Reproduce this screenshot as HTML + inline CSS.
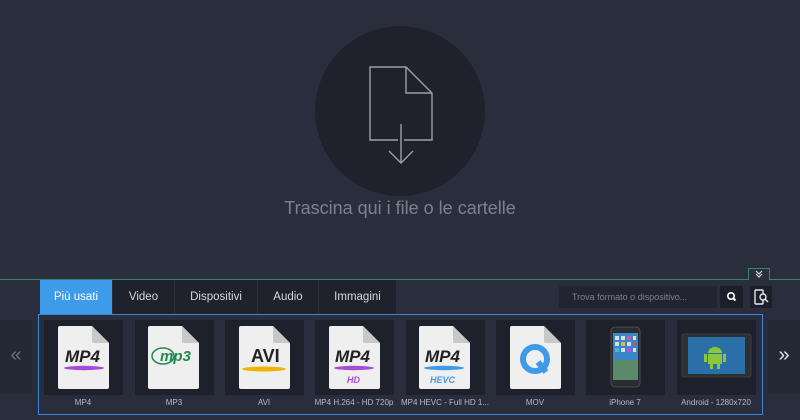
<!DOCTYPE html>
<html><head><meta charset="utf-8"><style>
*{margin:0;padding:0;box-sizing:border-box}
body{width:800px;height:420px;background:#2a2e3c;font-family:"Liberation Sans",sans-serif;position:relative;overflow:hidden}
.abs{position:absolute}
.circle{left:315px;top:26px;width:170px;height:170px;border-radius:50%;background:#1f222d}
.drop{left:0;width:800px;top:198px;text-align:center;color:#7c8190;font-size:18px}
.line{left:0;top:279px;width:800px;height:1px;background:#2f8a6a}
.tab{top:280px;height:34px;background:#1f222c;color:#d6d8de;font-size:11.5px;line-height:34px;text-align:center;border-right:1px solid #2a2e3c}
.tab.act{background:#3d9be9;color:#fff}
.box{left:38px;top:314px;width:725px;height:101px;border:1px solid #3d86d6}
.tile{top:320px;width:79px;height:75px;background:#1e212c}
.lbl{top:398px;width:90px;text-align:center;color:#b6bac4;font-size:8px}
.side{top:320px;width:32px;height:73px;background:#252935;color:#6c7180;font-size:20px;text-align:center;line-height:70px}
</style></head><body>
<div class="abs circle"></div>
<svg class="abs" style="left:0;top:0" width="800" height="200" fill="none" stroke="#9a9fad" stroke-width="1.4">
<path d="M398 140H370V67H406L432 93V140H404"/>
<path d="M406 67V93H432"/>
<path d="M401 124V163M389 151L401 163L413 151"/>
</svg>
<div class="abs drop">Trascina qui i file o le cartelle</div>
<div class="abs line"></div>
<div class="abs" style="left:748px;top:268px;width:22px;height:12px;border:1px solid #2f8a6a;border-bottom:none;background:#2a2e3c"></div>
<svg class="abs" style="left:748px;top:268px" width="22" height="12" fill="none" stroke="#d6d8de" stroke-width="1.2"><path d="M8 3L11 6L14 3M8 6L11 9L14 6"/></svg>
<div class="abs tab act" style="left:40px;width:73px">Più usati</div>
<div class="abs tab" style="left:113px;width:62px">Video</div>
<div class="abs tab" style="left:175px;width:83px">Dispositivi</div>
<div class="abs tab" style="left:258px;width:61px">Audio</div>
<div class="abs tab" style="left:319px;width:78px">Immagini</div>
<div class="abs" style="left:559px;top:286px;width:158px;height:22px;background:#222531;color:#7c8190;font-size:9px;line-height:22px;padding-left:13px">Trova formato o dispositivo...</div>
<div class="abs" style="left:720px;top:286px;width:23px;height:22px;background:#1c1f29"><svg width="23" height="22"><circle cx="11" cy="10" r="3.2" stroke="#fff" stroke-width="1.6" fill="none"/><path d="M13.3 12.3L15.5 14.5" stroke="#fff" stroke-width="2"/></svg></div>
<div class="abs" style="left:750px;top:286px;width:22px;height:22px;background:#1c1f29"><svg width="22" height="22" fill="none" stroke="#e6e8ee" stroke-width="1.4"><rect x="5" y="4" width="8" height="14" rx="1"/><circle cx="13" cy="11" r="3" fill="#1c1f29"/><path d="M15 13L18 16"/></svg></div>
<div class="abs side" style="left:0">«</div>
<div class="abs side" style="left:768px;color:#e0e2e8">»</div>
<div class="abs box"></div>

<div class="abs tile" style="left:44px"></div>
<div class="abs tile" style="left:135px"></div>
<div class="abs tile" style="left:225px"></div>
<div class="abs tile" style="left:315px"></div>
<div class="abs tile" style="left:406px"></div>
<div class="abs tile" style="left:496px"></div>
<div class="abs tile" style="left:586px"></div>
<div class="abs tile" style="left:677px"></div>

<svg class="abs" style="left:0;top:0" width="800" height="420">
<defs><g id="doc"><path d="M0 2Q0 0 2 0H34L51 17V61Q51 63 49 63H2Q0 63 0 61Z" fill="#efefef"/><path d="M34 0L51 17H36Q34 17 34 15Z" fill="#c8c8c8"/></g></defs>
<use href="#doc" x="58" y="326"/><use href="#doc" x="148" y="326"/><use href="#doc" x="239" y="326"/>
<use href="#doc" x="329" y="326"/><use href="#doc" x="419" y="326"/><use href="#doc" x="510" y="326"/>
<g font-family="Liberation Sans" font-weight="bold" font-style="italic">
<text x="65" y="362" font-size="17" fill="#222">MP4</text>
<ellipse cx="84" cy="368" rx="20" ry="2.2" fill="#a64bd6"/>
<text x="160" y="361" font-size="15" fill="#1e8a50">mp3</text>
<ellipse cx="163" cy="356" rx="11" ry="8" fill="none" stroke="#1e8a50" stroke-width="1.5"/>
<text x="251" y="362" font-size="18" fill="#222" font-style="normal">AVI</text>
<ellipse cx="264" cy="369" rx="22" ry="2.5" fill="#f0b400"/>
<text x="335" y="362" font-size="17" fill="#222">MP4</text>
<ellipse cx="354" cy="368" rx="20" ry="2.2" fill="#a64bd6"/>
<text x="347" y="383" font-size="9" fill="#a64bd6">HD</text>
<text x="425" y="362" font-size="17" fill="#222">MP4</text>
<ellipse cx="444" cy="368" rx="20" ry="2.2" fill="#3d9be9"/>
<text x="430" y="383" font-size="9" fill="#3d9be9">HEVC</text>
</g>
<circle cx="535" cy="359" r="12" fill="none" stroke="#3d9be9" stroke-width="6"/>
<path d="M538 362L546 372" stroke="#3d9be9" stroke-width="6"/>
<rect x="611" y="327" width="29" height="60" rx="4" fill="#2a2c30" stroke="#555" stroke-width="0.8"/>
<rect x="613" y="333" width="25" height="47" fill="#3a86c8"/>
<rect x="613" y="360" width="25" height="20" fill="#5a8a6a"/>
<g fill="#f0f0f0" opacity="0.85"><rect x="615" y="336" width="4" height="4"/><rect x="621" y="336" width="4" height="4"/><rect x="627" y="336" width="4" height="4" fill="#e05a9a"/><rect x="633" y="336" width="3" height="4"/><rect x="615" y="342" width="4" height="4"/><rect x="621" y="342" width="4" height="4" fill="#f5c33a"/><rect x="627" y="342" width="4" height="4"/><rect x="633" y="342" width="3" height="4" fill="#e04a4a"/><rect x="615" y="348" width="4" height="4" fill="#4ac0e0"/><rect x="621" y="348" width="4" height="4"/><rect x="627" y="348" width="4" height="4" fill="#d04ae0"/><rect x="633" y="348" width="3" height="4"/></g>
<rect x="682" y="334" width="69" height="43" rx="2" fill="#2d2f33" stroke="#444" stroke-width="0.8"/>
<rect x="688" y="337" width="57" height="37" fill="#2a6fa8"/>
<path d="M708 353a7 6 0 0 1 14 0Z" fill="#8cc63e"/><rect x="708" y="354" width="14" height="10" fill="#8cc63e"/><rect x="704" y="354" width="3" height="8" fill="#8cc63e"/><rect x="723" y="354" width="3" height="8" fill="#8cc63e"/><rect x="710" y="364" width="3" height="5" fill="#8cc63e"/><rect x="717" y="364" width="3" height="5" fill="#8cc63e"/>
</svg>

<div class="abs lbl" style="left:38px">MP4</div>
<div class="abs lbl" style="left:129px">MP3</div>
<div class="abs lbl" style="left:219px">AVI</div>
<div class="abs lbl" style="left:309px">MP4 H.264 - HD 720p</div>
<div class="abs lbl" style="left:400px">MP4 HEVC - Full HD 1...</div>
<div class="abs lbl" style="left:490px">MOV</div>
<div class="abs lbl" style="left:580px">iPhone 7</div>
<div class="abs lbl" style="left:671px">Android - 1280x720</div>
</body></html>
